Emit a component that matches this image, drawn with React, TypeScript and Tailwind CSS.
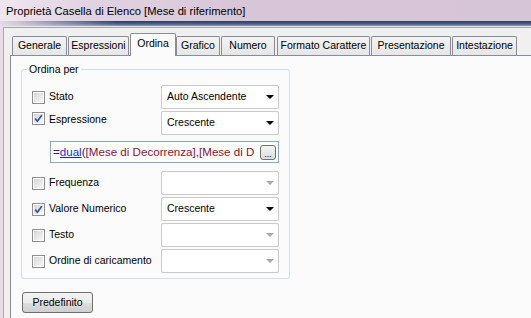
const tabs = [
  { label: "Generale", cls: "w-[55px] ml-[2px]" },
  { label: "Espressioni", cls: "w-[61px] ml-[1px]" },
  { label: "Ordina", cls: "w-[46px] ml-[1px]", active: true },
  { label: "Grafico", cls: "w-[44px] ml-0" },
  { label: "Numero", cls: "w-[54px] ml-[1px]" },
  { label: "Formato Carattere", cls: "w-[93px] ml-[2px]" },
  { label: "Presentazione", cls: "w-[80px] ml-[1px]" },
  { label: "Intestazione", cls: "w-[65px] ml-[1px]" },
];

function CheckBox({ checked }: { checked?: boolean }) {
  return (
    <div className="w-[13px] h-[13px] shrink-0 border border-[#8e8f8f] bg-white p-[1px]">
      <div className="w-full h-full bg-[linear-gradient(135deg,#d6d6d6,#f7f7f7)] flex items-center justify-center">
        {checked && (
          <svg width="9" height="9" viewBox="0 0 9 9">
            <path d="M1.2 4.6 L3.4 7.2 L7.8 1.2" fill="none" stroke="#34509a" strokeWidth="1.7" />
          </svg>
        )}
      </div>
    </div>
  );
}

function Combo({ value, disabled }: { value?: string; disabled?: boolean }) {
  return (
    <div className="ml-auto w-[118px] h-[24px] shrink-0 rounded-[2px] border border-[#c9c9c9] bg-white flex items-center pl-[5px] pr-[4px]">
      <span className="flex-1 text-[10.5px]">{value}</span>
      <svg width="8" height="4" viewBox="0 0 8 4">
        <path d="M0 0 H8 L4 4 Z" fill={disabled ? "#a8a8a8" : "#000"} />
      </svg>
    </div>
  );
}

function Row({
  label,
  checked,
  value,
  disabled,
  top,
}: {
  label: string;
  checked?: boolean;
  value?: string;
  disabled?: boolean;
  top?: boolean;
}) {
  return (
    <div className={`flex h-[24px] ${top ? "items-start" : "items-center"}`}>
      <div className={top ? "mt-[1px]" : ""}>
        <CheckBox checked={checked} />
      </div>
      <span className={`ml-[4px] text-[10.5px] ${top ? "mt-[1px]" : ""}`}>{label}</span>
      <Combo value={value} disabled={disabled} />
    </div>
  );
}

export default function App() {
  return (
    <div className="w-[531px] h-[318px] overflow-hidden flex flex-col bg-[#f0f0f0] font-['Liberation_Sans',Arial,sans-serif] text-black">
      {/* title bar */}
      <div className="h-[21px] shrink-0 flex items-center pl-[6px] pt-[2px] bg-[linear-gradient(90deg,#efe7ef_0%,#e2d4e2_15%,#d8c6d8_45%,#d6c4d7_100%)] text-[11.2px]">
        Proprietà Casella di Elenco [Mese di riferimento]
      </div>
      <div className="h-[5px] shrink-0 bg-[linear-gradient(90deg,#e6dbe6_0%,rgba(230,219,230,0)_22%),linear-gradient(180deg,#2b3b5c,#4d6288_60%,#8a9cc0)]" />
      <div className="h-[1px] shrink-0 bg-[#e9e3ea]" />

      <div className="flex-1 flex min-h-0">
        <div className="w-[3px] shrink-0 bg-[#e7dce7]" />
        <div className="flex-1 border-l border-t border-[#a7a7a7] pl-[6px] pt-[8px] flex flex-col min-h-0">
          {/* tabs */}
          <div className="flex h-[19px] shrink-0 relative z-10">
            {tabs.map((t) =>
              t.active ? (
                <div
                  key={t.label}
                  className={`${t.cls} h-[23px] -mt-[3px] border border-b-0 border-[#898c95] bg-[#fbfbfb] flex items-start justify-center pt-[2px] text-[10.5px] rounded-t-[2px]`}
                >
                  {t.label}
                </div>
              ) : (
                <div
                  key={t.label}
                  className={`${t.cls} h-[19px] border border-b-0 border-[#898c95] bg-[linear-gradient(180deg,#f3f3f3,#e6e6e6)] flex items-center justify-center text-[10.5px] rounded-t-[2px]`}
                >
                  {t.label}
                </div>
              )
            )}
          </div>

          {/* tab page */}
          <div className="flex-1 border-l border-t border-[#898c95] bg-[#fbfbfb] pl-[10px] pt-[7px] flex flex-col">
            <div className="relative mt-[6px] w-[269px] h-[210px] border border-[#d5dde3] rounded-[3px] px-[10px] pt-[15px] flex flex-col">
              <span className="absolute -top-[7px] left-[5px] px-[2px] bg-[#fbfbfb] text-[10.5px] leading-[12px]">
                Ordina per
              </span>
              <Row label="Stato" value="Auto Ascendente" />
              <div className="mt-[2px]">
                <Row label="Espressione" checked value="Crescente" top />
              </div>
              <div className="mt-[6px] ml-[18px] h-[22px] border border-[#8ba4c6] bg-white flex items-center pl-[2px] pr-[2px]">
                <div className="flex-1 min-w-0 whitespace-nowrap overflow-hidden text-[11.6px]">
                  <span className="text-[#1a1aa6]">=</span>
                  <span className="text-[#1f1fe0] underline">dual</span>
                  <span className="text-[#1a1a66]">(</span>
                  <span className="text-[#8a1030]">[Mese di Decorrenza]</span>
                  <span className="text-[#1a1a66]">,</span>
                  <span className="text-[#8a1030]">[Mese di D</span>
                </div>
                <div className="w-[16px] h-[15px] shrink-0 rounded-[3px] border border-[#707070] bg-[linear-gradient(180deg,#f4f4f4,#dcdcdc)] flex items-end justify-center pb-[2px] text-[9px] leading-[6px]">
                  ...
                </div>
              </div>
              <div className="mt-[8px]">
                <Row label="Frequenza" disabled />
              </div>
              <div className="mt-[2px]">
                <Row label="Valore Numerico" checked value="Crescente" />
              </div>
              <div className="mt-[2px]">
                <Row label="Testo" disabled />
              </div>
              <div className="mt-[2px]">
                <Row label="Ordine di caricamento" disabled />
              </div>
            </div>

            <div className="mt-[13px] ml-[1px] w-[71px] h-[21px] rounded-[3px] border border-[#707070] bg-[linear-gradient(180deg,#f3f3f3_0%,#ebebeb_50%,#dddddd_51%,#cfcfcf_100%)] flex items-center justify-center text-[10.5px]">
              Predefinito
            </div>
          </div>
        </div>
      </div>
    </div>
  );
}
